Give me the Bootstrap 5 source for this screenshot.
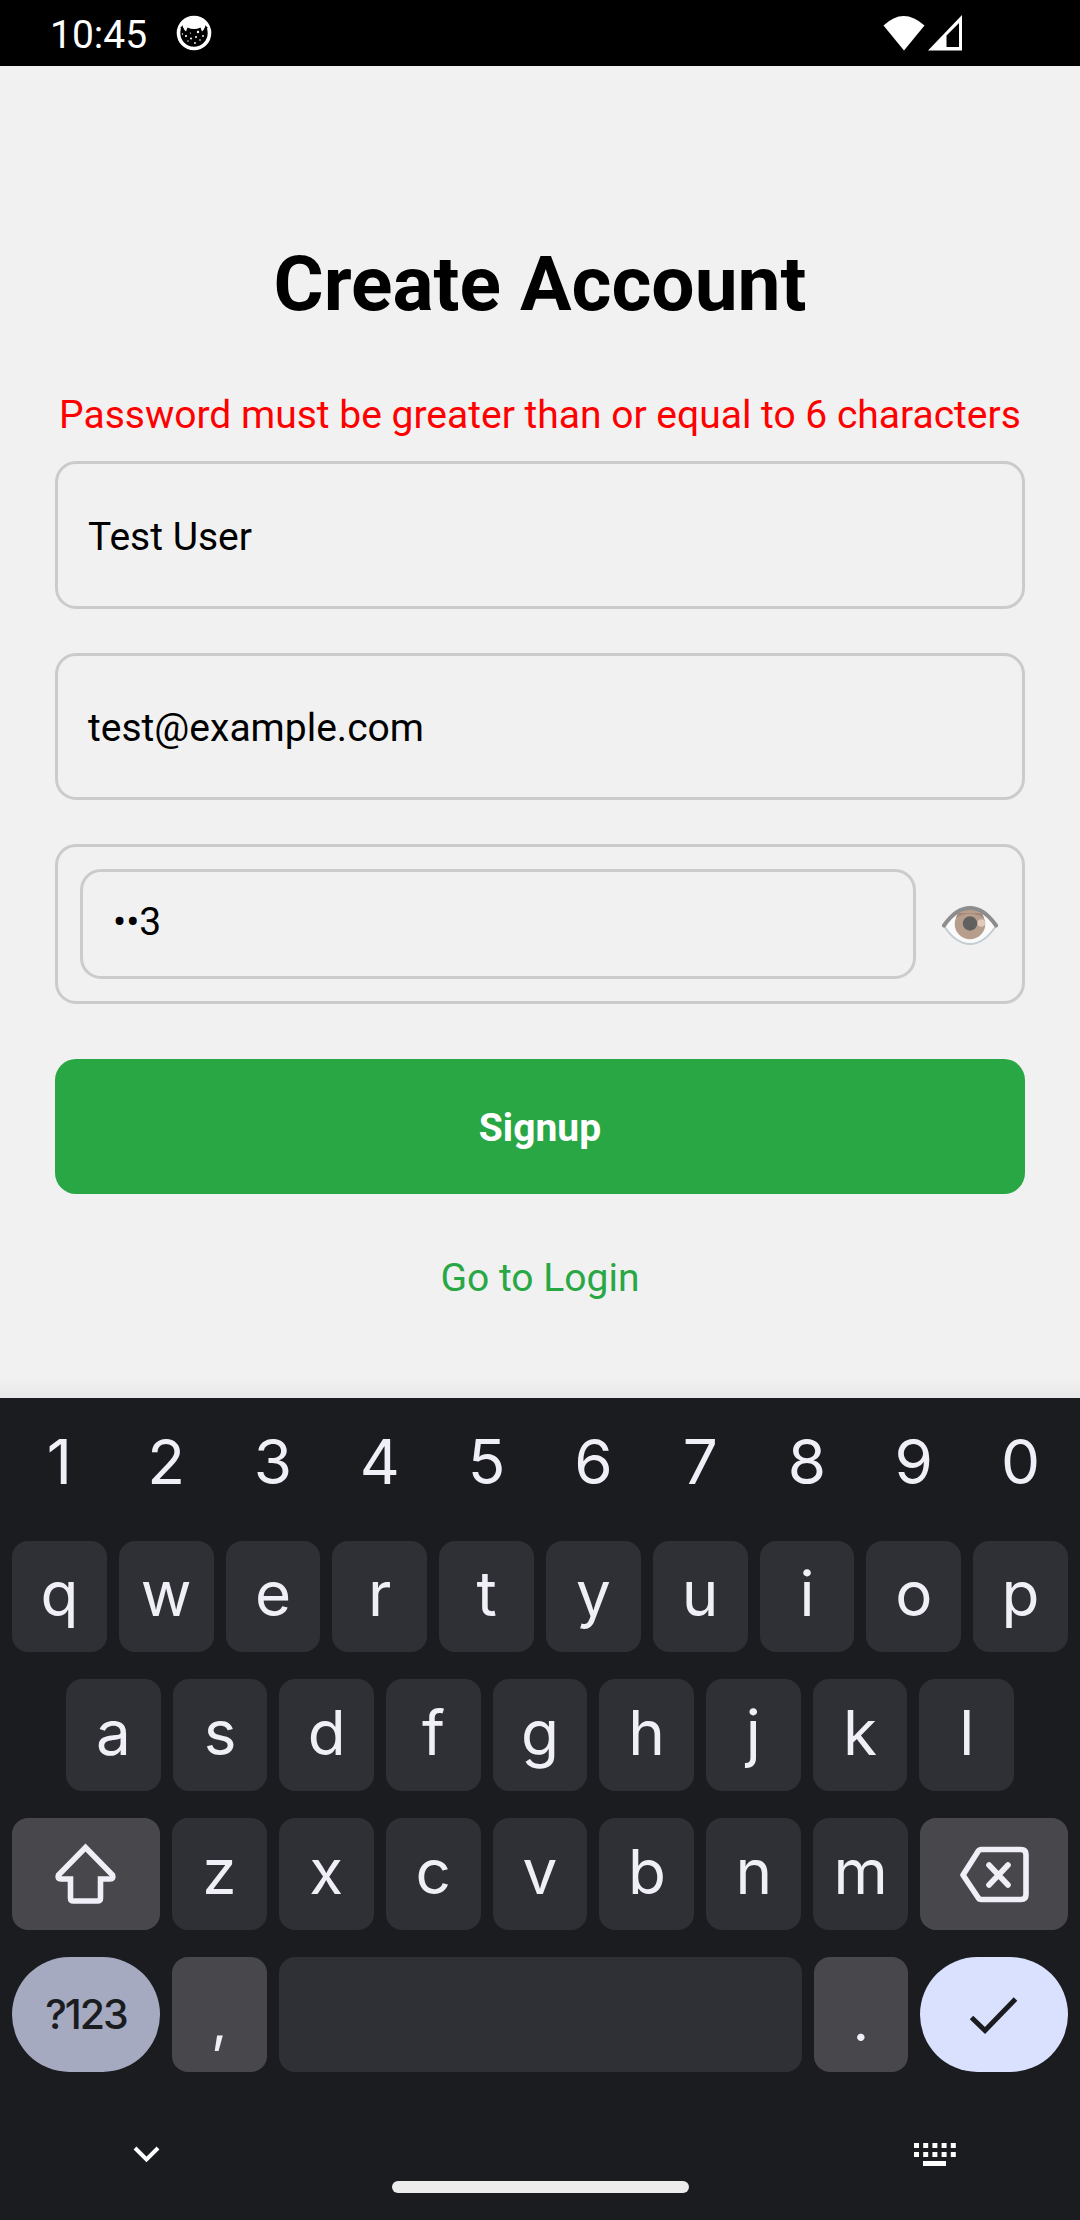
<!DOCTYPE html>
<html lang="en">
<head>
<meta charset="utf-8">
<meta name="viewport" content="width=device-width, initial-scale=1">
<title>Create Account</title>
<link rel="stylesheet" href="https://cdn.jsdelivr.net/npm/bootstrap@5.3.0/dist/css/bootstrap.min.css">
<style>
body{width:1080px;height:2220px;background:#f1f1f1;font-family:Roboto,sans-serif;color:#000;overflow:hidden}
svg{display:block;flex:none}
.statusbar{height:66px;background:#000;color:#fff;padding:0 118px 0 50px}
.clock{font-size:39px;line-height:66px;margin-top:4px;width:126px}
.signal{margin-left:3px}
.screen{height:1332px;padding:173px 55px 0;background:linear-gradient(#f1f1f1 0 1312px,#e8e8e8)}
.title{font-size:76.700px;font-weight:700;line-height:90px;margin:0}
.err{color:#f00;font-size:39px;line-height:46px;margin:63px -10px 23px;white-space:nowrap}
.field{border:3px solid #cbcbcb;border-radius:21px;background:transparent;color:#000;font-size:39px;line-height:46px;height:148px;padding:3px 30px 0;display:flex;align-items:center}
.field-mail{height:147px;margin:44px 0}
.field-inner{height:110px;width:836px;padding-top:0;padding-bottom:5px}
.field-pass{height:160px;padding:0 22px;margin-bottom:55px}
.eye{margin:3px 0 0 26px}
.signup{height:135px;border:0;border-radius:21px;background:#2aa745!important;font-size:39px;font-weight:700;line-height:46px;padding-top:8px}
.login{color:#2aa745;font-size:39px;line-height:46px;margin-top:61px}
.keyboard{height:822px;background:#1b1c20;color:#f0eff7;font-family:Inter,sans-serif;padding:0 12px}
.keys{gap:12px;height:112px;margin-bottom:27px;font-size:62px}
.keys.digits{margin-bottom:31px;padding-top:20px}
.keys.top-row{height:111px}
.keycap{flex:1 1 0;min-width:0;border-radius:16px;background:#2f3035;display:flex;align-items:center;justify-content:center;padding-bottom:5px;line-height:1}
.digits .keycap{background:none}
.keys.home{padding:0 54px}
.side{flex:none;width:148px;background:#48474c;padding:0}
.dim{background:#48474c;flex:none;width:94.5px}
.pill{border-radius:58px}
.sym{background:#a6aac1;color:#1b1c20;font-size:41px;font-weight:500;letter-spacing:-2px}
.done{background:#dae1ff}
.keys.bottom-row{height:115px;margin-bottom:0}
.punct{padding:13px 0 0;font-size:56px}
.navrow{padding:0 112px 0 121px;margin-top:71px;height:24px}
.homebar{width:297px;height:12px;border-radius:6px;background:#ececec;margin:14px auto 0}
</style>
<script src="https://cdn.jsdelivr.net/npm/bootstrap@5.3.0/dist/js/bootstrap.bundle.min.js"></script>
</head>
<body>
<header class="statusbar d-flex align-items-center">
  <div class="clock">10:45</div>
  <svg width="36" height="36" viewBox="0 0 36 36"><circle cx="18" cy="18" r="15.500" fill="#000" stroke="#fff" stroke-width="3.600"/><path d="M6 8Q18-4 30 8L28.500 14 26 16.500 24.500 12.500Q18 15.500 11.500 12.500L10 16.500 7.500 14Z" fill="#fff"/><path d="M5 12 7.500 15M31 12 28.500 15" stroke="#000" stroke-width="2"/><g fill="#fff"><circle cx="6.500" cy="19" r=".7"/><circle cx="10" cy="21" r="1.100"/><circle cx="14.500" cy="18" r=".6"/><circle cx="15" cy="23.500" r="1"/><circle cx="22" cy="17" r="1.200"/><circle cx="20" cy="22" r="1"/><circle cx="27" cy="21" r=".9"/><circle cx="12" cy="26" r=".7"/><circle cx="19" cy="28" r=".9"/><circle cx="24" cy="25" r=".8"/></g></svg>
  <svg class="ms-auto" width="42" height="36" viewBox="0 0 42 36"><path d="M.5 10.500Q20.500-8.500 41.500 10.500L21 35.500Z" fill="#fff"/></svg>
  <svg class="signal" width="34" height="36" viewBox="0 0 34 36"><path fill-rule="evenodd" d="M0 35.500 34 0V35.500ZM18.500 20.500V32H31V8Z" fill="#fff"/></svg>
</header>
<main class="screen">
  <h1 class="title text-center">Create Account</h1>
  <p class="err text-center">Password must be greater than or equal to 6 characters</p>
  <div class="field form-control">Test User</div>
  <div class="field field-mail form-control">test@example.com</div>
  <div class="field field-pass form-control">
    <div class="field field-inner">••3</div>
    <svg class="eye" width="56" height="42" viewBox="0 0 56 42"><path d="M2 21Q14 4 28 4T54 21Q42 39 28 39T2 21Z" fill="#fafafa" stroke="#c3cdd3" stroke-width="2"/><circle cx="28" cy="19" r="15.300" fill="#b79d8c"/><path d="M14 13Q27 4 42 13L40 8H16Z" fill="#a28878"/><circle cx="28" cy="18.500" r="7.200" fill="#606060"/><circle cx="39.300" cy="18" r="3.800" fill="#e3cabd"/><path d="M2 20.500Q14 3 28 3T54 20.500" fill="none" stroke="#8d8d8d" stroke-width="4" stroke-linecap="round"/></svg>
  </div>
  <button class="signup btn btn-success w-100">Signup</button>
  <div class="login text-center">Go to Login</div>
</main>
<section class="keyboard">
  <div class="keys digits d-flex">
    <span class="keycap">1</span><span class="keycap">2</span><span class="keycap">3</span><span class="keycap">4</span><span class="keycap">5</span><span class="keycap">6</span><span class="keycap">7</span><span class="keycap">8</span><span class="keycap">9</span><span class="keycap">0</span>
  </div>
  <div class="keys top-row d-flex">
    <span class="keycap">q</span><span class="keycap">w</span><span class="keycap">e</span><span class="keycap">r</span><span class="keycap">t</span><span class="keycap">y</span><span class="keycap">u</span><span class="keycap">i</span><span class="keycap">o</span><span class="keycap">p</span>
  </div>
  <div class="keys home d-flex">
    <span class="keycap">a</span><span class="keycap">s</span><span class="keycap">d</span><span class="keycap">f</span><span class="keycap">g</span><span class="keycap">h</span><span class="keycap">j</span><span class="keycap">k</span><span class="keycap">l</span>
  </div>
  <div class="keys d-flex">
    <span class="keycap side"><svg width="64" height="64" viewBox="0 0 64 64"><path d="M31.500 5.500 58.500 33Q60 37 56 37H46.500V56Q46.500 59 43.500 59H19.500Q16.500 59 16.500 56V37H7Q3 37 4.500 33Z" fill="none" stroke="#f0eff7" stroke-width="5.600"/></svg></span>
    <span class="keycap">z</span><span class="keycap">x</span><span class="keycap">c</span><span class="keycap">v</span><span class="keycap">b</span><span class="keycap">n</span><span class="keycap">m</span>
    <span class="keycap side"><svg width="72" height="60" viewBox="0 0 72 60"><g fill="none" stroke="#f0eff7" stroke-width="5.600" stroke-linejoin="round"><path d="M5 31 20 7.500Q21 5.500 23.500 5.500H63Q68 5.500 68 10.500V50.500Q68 55.500 63 55.500H23.500Q21 55.500 20 53.500Z"/><path d="M31 21 50 41M50 21 31 41" stroke-linecap="round"/></g></svg></span>
  </div>
  <div class="keys bottom-row d-flex">
    <span class="keycap side pill sym">?123</span>
    <span class="keycap dim punct">,</span>
    <span class="keycap"></span>
    <span class="keycap dim punct">.</span>
    <span class="keycap side pill done"><svg width="50" height="40" viewBox="0 0 50 40"><path d="M2.500 22.500 16 35.500 46.500 4" fill="none" stroke="#1b1c20" stroke-width="5"/></svg></span>
  </div>
  <div class="navrow d-flex justify-content-between">
    <svg width="50" height="24" viewBox="0 0 50 24"><path d="M14 5 25.500 16.500 37 5" transform="translate(-12 0)" fill="none" stroke="#fff" stroke-width="4"/></svg>
    <svg width="42" height="24" viewBox="0 0 42 24"><path d="M0 2.500H42M0 11.500H42" stroke="#fff" stroke-width="5" stroke-dasharray="5 4.200"/><path d="M9 20.500H32" stroke="#fff" stroke-width="5"/></svg>
  </div>
  <div class="homebar"></div>
</section>
</body>
</html>
